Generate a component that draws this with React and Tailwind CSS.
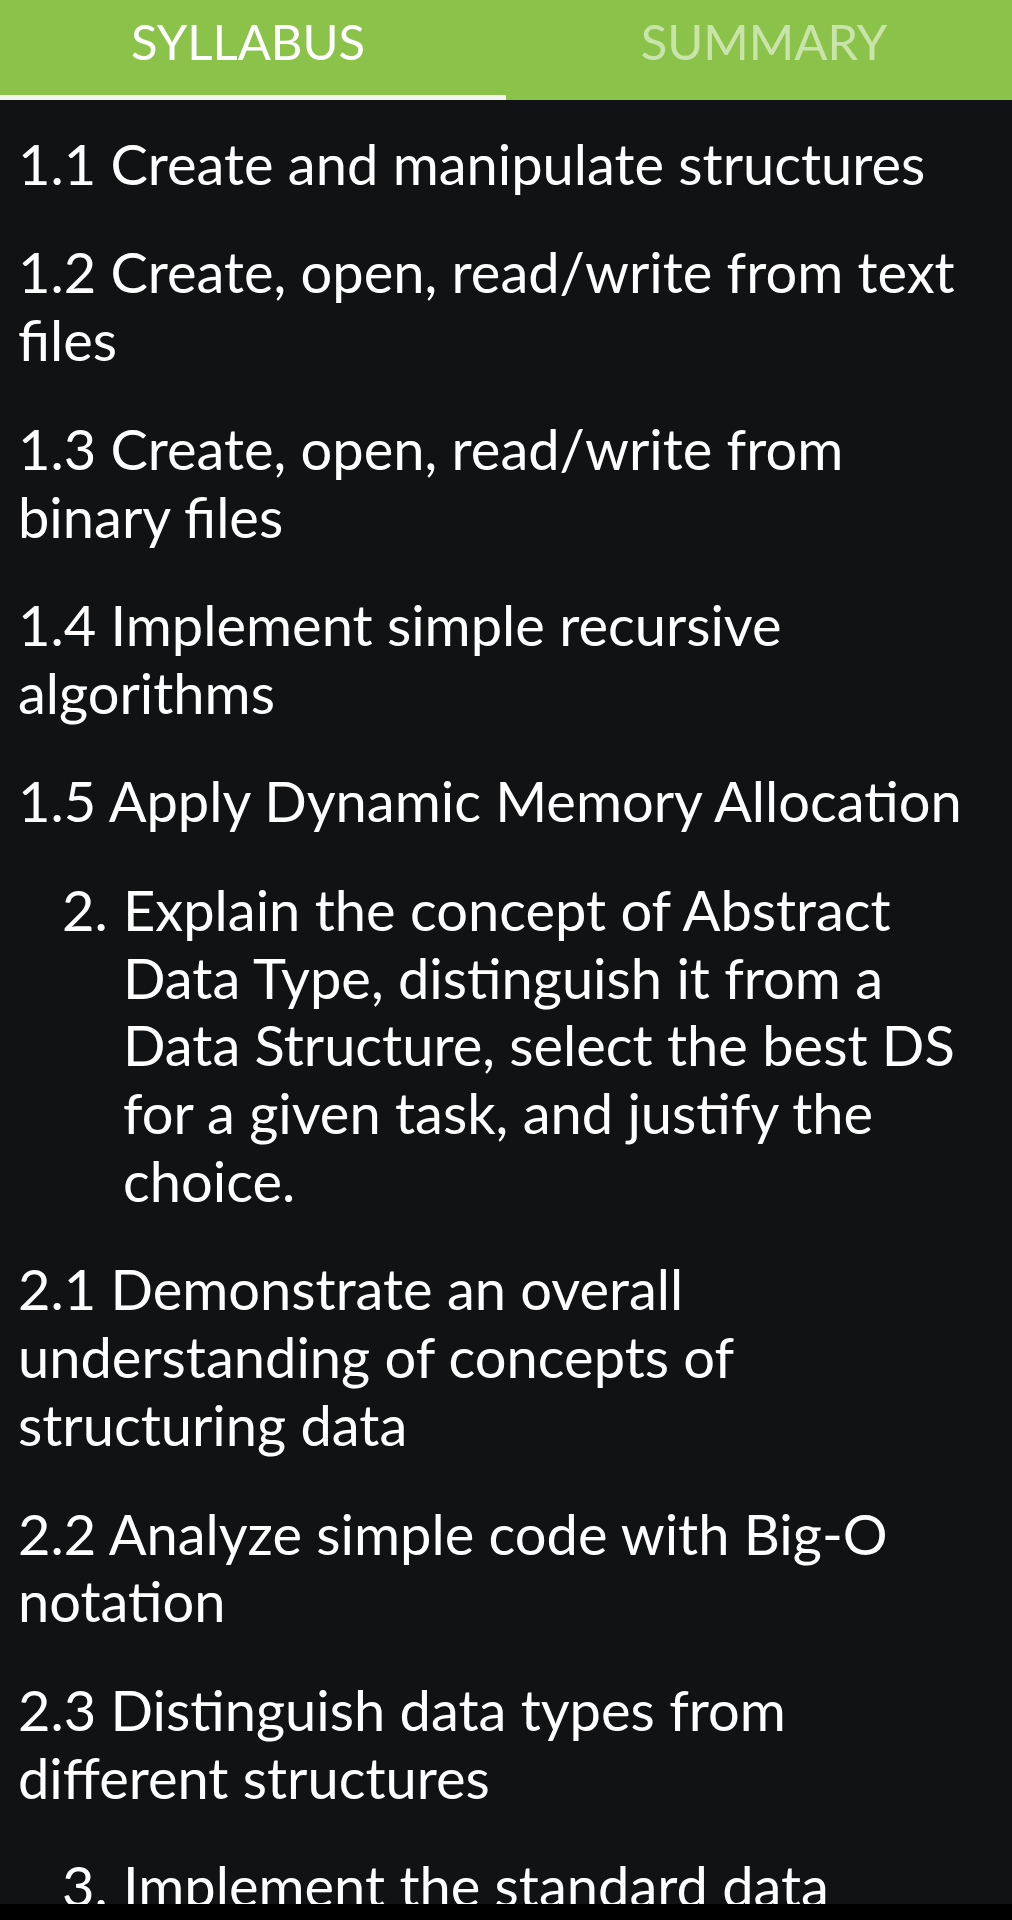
import React, { useState } from 'react';

const items = [
  { type: 'sub', text: '1.1 Create and manipulate structures' },
  { type: 'sub', text: '1.2 Create, open, read/write from text files' },
  { type: 'sub', text: '1.3 Create, open, read/write from binary files' },
  { type: 'sub', text: '1.4 Implement simple recursive algorithms' },
  { type: 'sub', text: '1.5 Apply Dynamic Memory Allocation' },
  {
    type: 'main',
    num: '2.',
    text: 'Explain the concept of Abstract Data Type, distinguish it from a Data Structure, select the best DS for a given task, and justify the choice.',
  },
  { type: 'sub', text: '2.1 Demonstrate an overall understanding of concepts of structuring data' },
  { type: 'sub', text: '2.2 Analyze simple code with Big-O notation' },
  { type: 'sub', text: '2.3 Distinguish data types from different structures' },
  { type: 'main', num: '3.', text: 'Implement the standard data structures and explain how they work.' },
];

const tabs = ['SYLLABUS', 'SUMMARY'];

export default function App() {
  const [active, setActive] = useState(0);

  return (
    <div
      className="h-[1920px] flex flex-col bg-[#111214] text-white overflow-hidden"
      style={{ fontFamily: 'Lato, "Noto Sans", sans-serif' }}
    >
      {/* Tabs */}
      <div className="h-[100px] flex bg-[#8bc34a] shrink-0">
        {tabs.map((t, i) => (
          <button
            key={t}
            onClick={() => setActive(i)}
            className={`flex-1 flex flex-col ${i === active ? 'text-white' : 'text-[#c9e4aa]'}`}
          >
            <span
              className={`flex-1 flex items-center justify-center text-[49px] leading-none pb-[12px] ${
                i === 0 ? 'pr-[10px]' : 'pl-[10px]'
              }`}
            >
              {t}
            </span>
            <span className={`h-[5px] w-full ${i === active ? 'bg-[#f3f6ee]' : 'bg-transparent'}`} />
          </button>
        ))}
      </div>

      {/* Syllabus list */}
      <div className="flex-1 overflow-hidden px-[18px] pt-[30px] text-[56px] leading-[67.8px]">
        {items.map((it, i) =>
          it.type === 'sub' ? (
            <p key={i} className="mb-[40.7px]">{it.text}</p>
          ) : (
            <div key={i} className="mb-[40.7px] flex pl-[44px]">
              <span className="w-[61px] shrink-0">{it.num}</span>
              <p>{it.text}</p>
            </div>
          )
        )}
      </div>

      {/* system nav bar */}
      <div className="h-[16px] bg-black shrink-0" />
    </div>
  );
}
